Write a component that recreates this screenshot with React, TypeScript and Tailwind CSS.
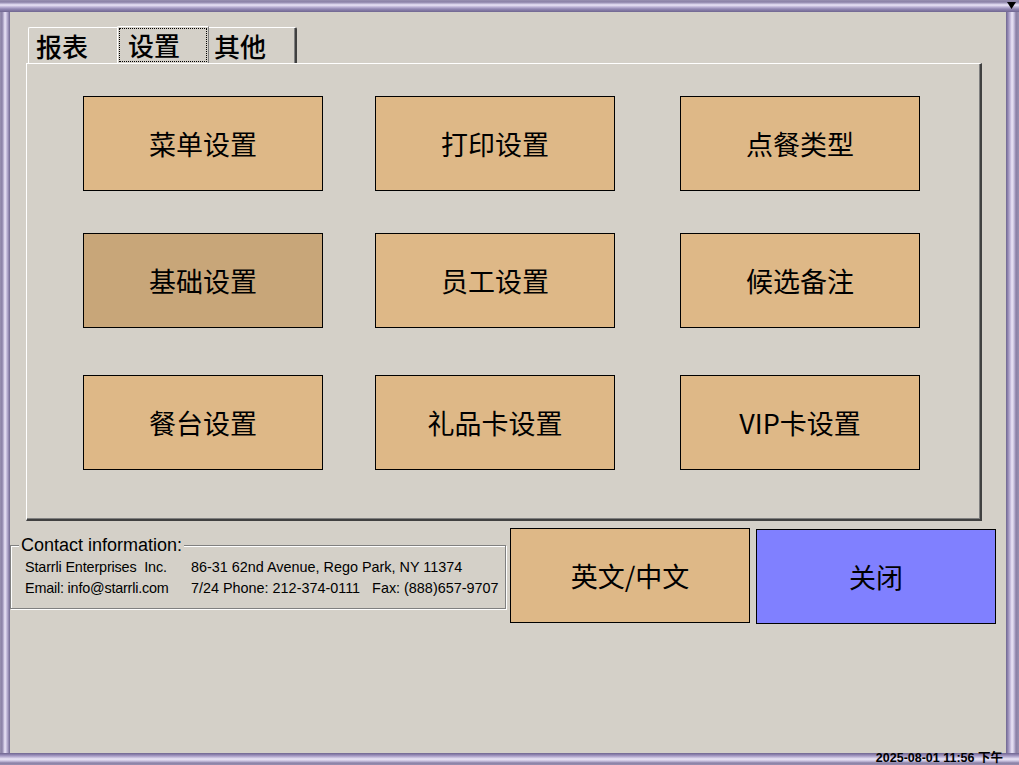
import React from "react";

const cjk = "font-['Noto_Sans_CJK_SC','Noto_Sans_CJK_JP',sans-serif]";

function Btn({ label, dark, className = "" }: { label: string; dark?: boolean; className?: string }) {
  return (
    <div
      className={`w-[240px] h-[95px] border border-black flex items-center justify-center pt-[2px] text-[27px] text-black font-normal ${cjk} ${
        dark ? "bg-[#c8a679]" : "bg-[#deb887]"
      } ${className}`}
    >
      {label}
    </div>
  );
}

export default function App() {
  return (
    <div className="w-[1019px] h-[765px] bg-[#d4d0c8] flex flex-col relative overflow-hidden">
      {/* top frame */}
      <div className="h-[12px] shrink-0 bg-[linear-gradient(to_bottom,#9890b0_0px,#8a80a6_2px,#c9c1de_4px,#ebe6f7_5px,#bdb3d6_7px,#9287b3_9px,#6f6690_12px)]" />
      <svg className="absolute right-[3px] top-[2px]" width="9" height="7" viewBox="0 0 9 7">
        <polygon points="0,0 9,0 4.5,7" fill="#000" />
      </svg>

      <div className="flex flex-1 min-h-0">
        {/* left frame */}
        <div className="w-[10px] shrink-0 bg-[linear-gradient(to_right,#9890b0_0px,#8a80a6_2px,#c9c1de_4px,#ebe6f7_5px,#bdb3d6_7px,#6f6690_10px)]" />

        {/* content */}
        <div className="flex-1 flex flex-col">
          {/* tabs */}
          <div className={`flex items-end h-[51px] pl-[18px] ${cjk} font-medium`}>
            <div className="w-[89px] h-[36px] border-t border-l border-white rounded-tl-[2px] flex items-center pl-[7px] text-[26px] leading-none text-black">
              报表
            </div>
            <div className="w-[92px] h-[37px] border-t border-l border-white border-r border-r-[#808080] rounded-tl-[2px] flex items-center justify-center p-[1px]">
              <div className="w-full h-full border border-dotted border-black flex items-center pl-[8px] text-[26px] leading-none text-black">
                设置
              </div>
            </div>
            <div className="w-[88px] h-[36px] border-t border-white border-r-2 border-r-[#404040] rounded-tr-[2px] flex items-center pl-[5px] text-[26px] leading-none text-black shadow-[inset_-1px_0_0_#808080]">
              其他
            </div>
          </div>

          {/* panel */}
          <div className="ml-[16px] w-[956px] h-[458px] border-t border-l border-white border-r-2 border-b-2 border-r-[#404040] border-b-[#404040] shadow-[inset_-1px_-1px_0_#808080] flex flex-col pt-[32px]">
            <div className="flex">
              <Btn label="菜单设置" className="ml-[56px]" />
              <Btn label="打印设置" className="ml-[52px]" />
              <Btn label="点餐类型" className="ml-[65px]" />
            </div>
            <div className="flex mt-[42px]">
              <Btn label="基础设置" dark className="ml-[56px]" />
              <Btn label="员工设置" className="ml-[52px]" />
              <Btn label="候选备注" className="ml-[65px]" />
            </div>
            <div className="flex mt-[47px]">
              <Btn label="餐台设置" className="ml-[56px]" />
              <Btn label="礼品卡设置" className="ml-[52px]" />
              <Btn label="VIP卡设置" className="ml-[65px]" />
            </div>
          </div>

          {/* bottom row */}
          <div className="flex mt-[7px]">
            <div className="relative mt-[17px] w-[496px] h-[64px] border border-[#808080] shadow-[inset_1px_1px_0_#fff,1px_1px_0_#fff] font-['Liberation_Sans',Arial,sans-serif] text-black">
              <div className="absolute left-[8px] top-[-11px] bg-[#d4d0c8] px-[2px] text-[18px] leading-[20px]">
                Contact information:
              </div>
              <div className="flex flex-col pt-[11px] pl-[14px] text-[14.4px] leading-[21px] whitespace-nowrap">
                <div className="flex">
                  <span className="w-[166px] tracking-[-0.15px]">Starrli Enterprises&nbsp; Inc.</span>
                  <span>86-31 62nd Avenue, Rego Park, NY 11374</span>
                </div>
                <div className="flex">
                  <span className="w-[166px] tracking-[-0.2px]">Email: info@starrli.com</span>
                  <span>7/24 Phone: 212-374-0111&nbsp;&nbsp; Fax: (888)657-9707</span>
                </div>
              </div>
            </div>
            <Btn label="英文/中文" className="ml-[4px]" />
            <div
              className={`ml-[6px] mt-[1px] w-[240px] h-[95px] border border-black bg-[#8080ff] flex items-center justify-center pt-[2px] text-[27px] text-black font-normal ${cjk}`}
            >
              关闭
            </div>
          </div>
        </div>

        {/* right frame */}
        <div className="w-[13px] shrink-0 bg-[linear-gradient(to_right,#6f6690_0px,#9287b3_2px,#bdb3d6_4px,#ebe6f7_6px,#c9c1de_8px,#8a80a6_10px,#9890b0_13px)]" />
      </div>

      {/* bottom frame */}
      <div className="h-[12px] shrink-0 flex justify-end items-end pr-[16px] bg-[linear-gradient(to_bottom,#6f6690_0px,#9287b3_2px,#bdb3d6_4px,#ebe6f7_6px,#c9c1de_8px,#8a80a6_10px,#9890b0_12px)]">
        <span className={`text-[12.5px] leading-[13px] font-bold text-black font-['Liberation_Sans','Noto_Sans_CJK_SC',sans-serif] whitespace-nowrap`}>
          2025-08-01 11:56 下午
        </span>
      </div>
    </div>
  );
}
